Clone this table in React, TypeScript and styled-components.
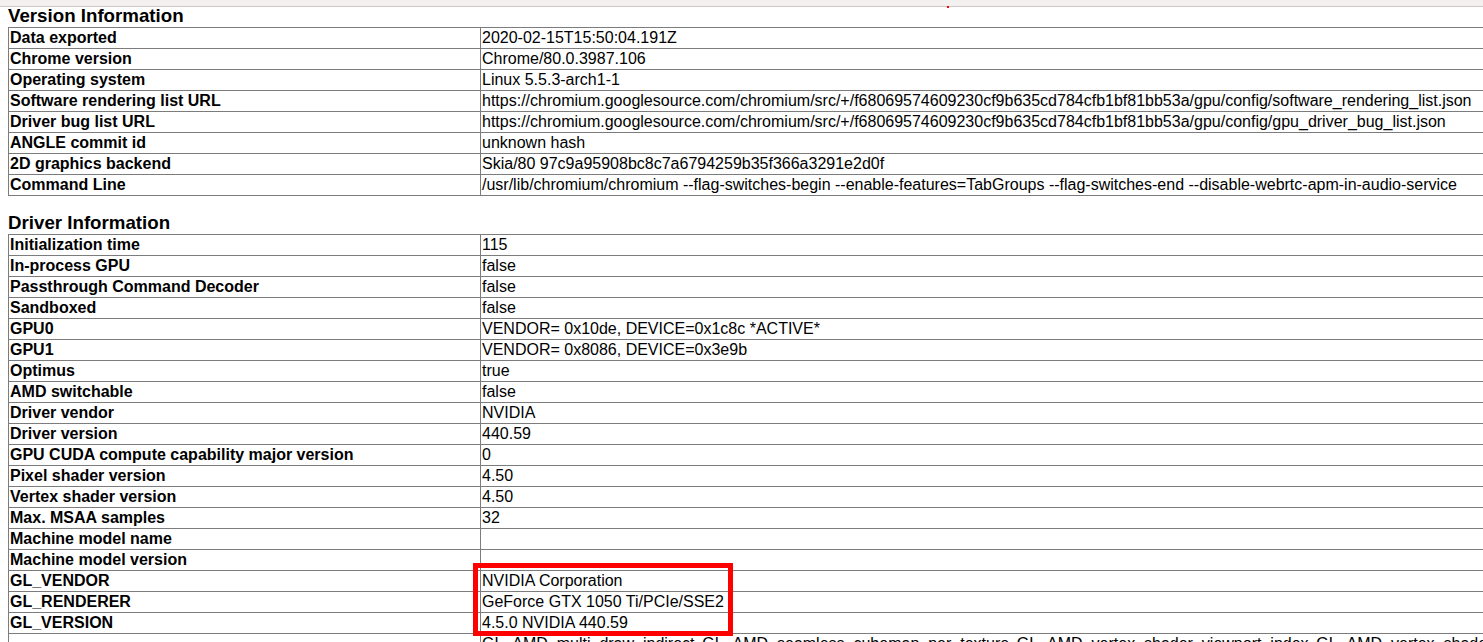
import React from "react";
import styled, { createGlobalStyle } from "styled-components";

const Global = createGlobalStyle`
  html, body {
    margin: 0;
    padding: 0;
    background: #ffffff;
    overflow: hidden;
  }
  body {
    font-family: "Liberation Sans", Arial, sans-serif;
    color: #000;
  }
`;

const TopStrip = styled.div`
  height: 6px;
  background: #f3f1ef;
  border-bottom: 1px solid #cdc8c4;
  position: relative;
`;

const RedDot = styled.span`
  position: absolute;
  left: 947px;
  top: 6px;
  width: 2px;
  height: 2px;
  background: #ff0000;
`;

const Content = styled.div`
  position: relative;
  padding: 0 8px;
`;

const Heading = styled.h3<{ $first?: boolean }>`
  margin: ${(p) => (p.$first ? "0" : "18px")} 0 0 0;
  padding-bottom: 2px;
  font-size: 18.72px;
  line-height: 18px;
  font-weight: bold;
`;

const InfoTable = styled.table`
  border-collapse: collapse;
  table-layout: fixed;
  width: 1530px;
  font-size: 16px;
  line-height: 18px;
`;

const Cell = styled.td<{ $label?: boolean; $justify?: boolean }>`
  border: 1px solid #7c7c7c;
  padding: 1px 1px;
  font-weight: ${(p) => (p.$label ? "bold" : "normal")};
  text-align: ${(p) => (p.$justify ? "justify" : "left")};
  vertical-align: middle;
  white-space: ${(p) => (p.$justify ? "normal" : "nowrap")};
`;

const Annotation = styled.div`
  position: absolute;
  left: 473px;
  top: 556px;
  width: 250px;
  height: 63px;
  border: 5px solid #ff0000;
  pointer-events: none;
`;

type Row = [string, string];

const versionRows: Row[] = [
  ["Data exported", "2020-02-15T15:50:04.191Z"],
  ["Chrome version", "Chrome/80.0.3987.106"],
  ["Operating system", "Linux 5.5.3-arch1-1"],
  [
    "Software rendering list URL",
    "https://chromium.googlesource.com/chromium/src/+/f68069574609230cf9b635cd784cfb1bf81bb53a/gpu/config/software_rendering_list.json",
  ],
  [
    "Driver bug list URL",
    "https://chromium.googlesource.com/chromium/src/+/f68069574609230cf9b635cd784cfb1bf81bb53a/gpu/config/gpu_driver_bug_list.json",
  ],
  ["ANGLE commit id", "unknown hash"],
  ["2D graphics backend", "Skia/80 97c9a95908bc8c7a6794259b35f366a3291e2d0f"],
  [
    "Command Line",
    "/usr/lib/chromium/chromium --flag-switches-begin --enable-features=TabGroups --flag-switches-end --disable-webrtc-apm-in-audio-service",
  ],
];

const driverRows: Row[] = [
  ["Initialization time", "115"],
  ["In-process GPU", "false"],
  ["Passthrough Command Decoder", "false"],
  ["Sandboxed", "false"],
  ["GPU0", "VENDOR= 0x10de, DEVICE=0x1c8c *ACTIVE*"],
  ["GPU1", "VENDOR= 0x8086, DEVICE=0x3e9b"],
  ["Optimus", "true"],
  ["AMD switchable", "false"],
  ["Driver vendor", "NVIDIA"],
  ["Driver version", "440.59"],
  ["GPU CUDA compute capability major version", "0"],
  ["Pixel shader version", "4.50"],
  ["Vertex shader version", "4.50"],
  ["Max. MSAA samples", "32"],
  ["Machine model name", ""],
  ["Machine model version", ""],
  ["GL_VENDOR", "NVIDIA Corporation"],
  ["GL_RENDERER", "GeForce GTX 1050 Ti/PCIe/SSE2"],
  ["GL_VERSION", "4.5.0 NVIDIA 440.59"],
];

const extensions =
  "GL_AMD_multi_draw_indirect GL_AMD_seamless_cubemap_per_texture GL_AMD_vertex_shader_viewport_index GL_AMD_vertex_shader_layer GL_ARB_arrays_of_arrays GL_ARB_base_instance GL_ARB_bindless_texture GL_ARB_blend_func_extended GL_ARB_buffer_storage GL_ARB_clear_buffer_object GL_ARB_clear_texture GL_ARB_clip_control GL_ARB_color_buffer_float GL_ARB_compatibility GL_ARB_compressed_texture_pixel_storage GL_ARB_conservative_depth GL_ARB_compute_shader GL_ARB_compute_variable_group_size GL_ARB_conditional_render_inverted GL_ARB_copy_buffer GL_ARB_copy_image GL_ARB_cull_distance GL_ARB_debug_output GL_ARB_depth_buffer_float GL_ARB_depth_clamp GL_ARB_depth_texture GL_ARB_derivative_control GL_ARB_direct_state_access GL_ARB_draw_buffers GL_ARB_draw_buffers_blend GL_ARB_draw_indirect GL_ARB_draw_elements_base_vertex GL_ARB_draw_instanced";

const InfoSection: React.FC<{ title: string; rows: Row[]; first?: boolean; extra?: Row }> = ({
  title,
  rows,
  first,
  extra,
}) => (
  <>
    <Heading $first={first}>{title}</Heading>
    <InfoTable>
      <colgroup>
        <col style={{ width: 472 }} />
        <col />
      </colgroup>
      <tbody>
        {rows.map(([k, v]) => (
          <tr key={k}>
            <Cell $label>{k}</Cell>
            <Cell>{v}</Cell>
          </tr>
        ))}
        {extra && (
          <tr>
            <Cell $label>{extra[0]}</Cell>
            <Cell $justify>{extra[1]}</Cell>
          </tr>
        )}
      </tbody>
    </InfoTable>
  </>
);

export default function App() {
  return (
    <>
      <Global />
      <TopStrip>
        <RedDot />
      </TopStrip>
      <Content>
        <InfoSection title="Version Information" rows={versionRows} first />
        <InfoSection
          title="Driver Information"
          rows={driverRows}
          extra={["GL_EXTENSIONS", extensions]}
        />
        <Annotation />
      </Content>
    </>
  );
}
